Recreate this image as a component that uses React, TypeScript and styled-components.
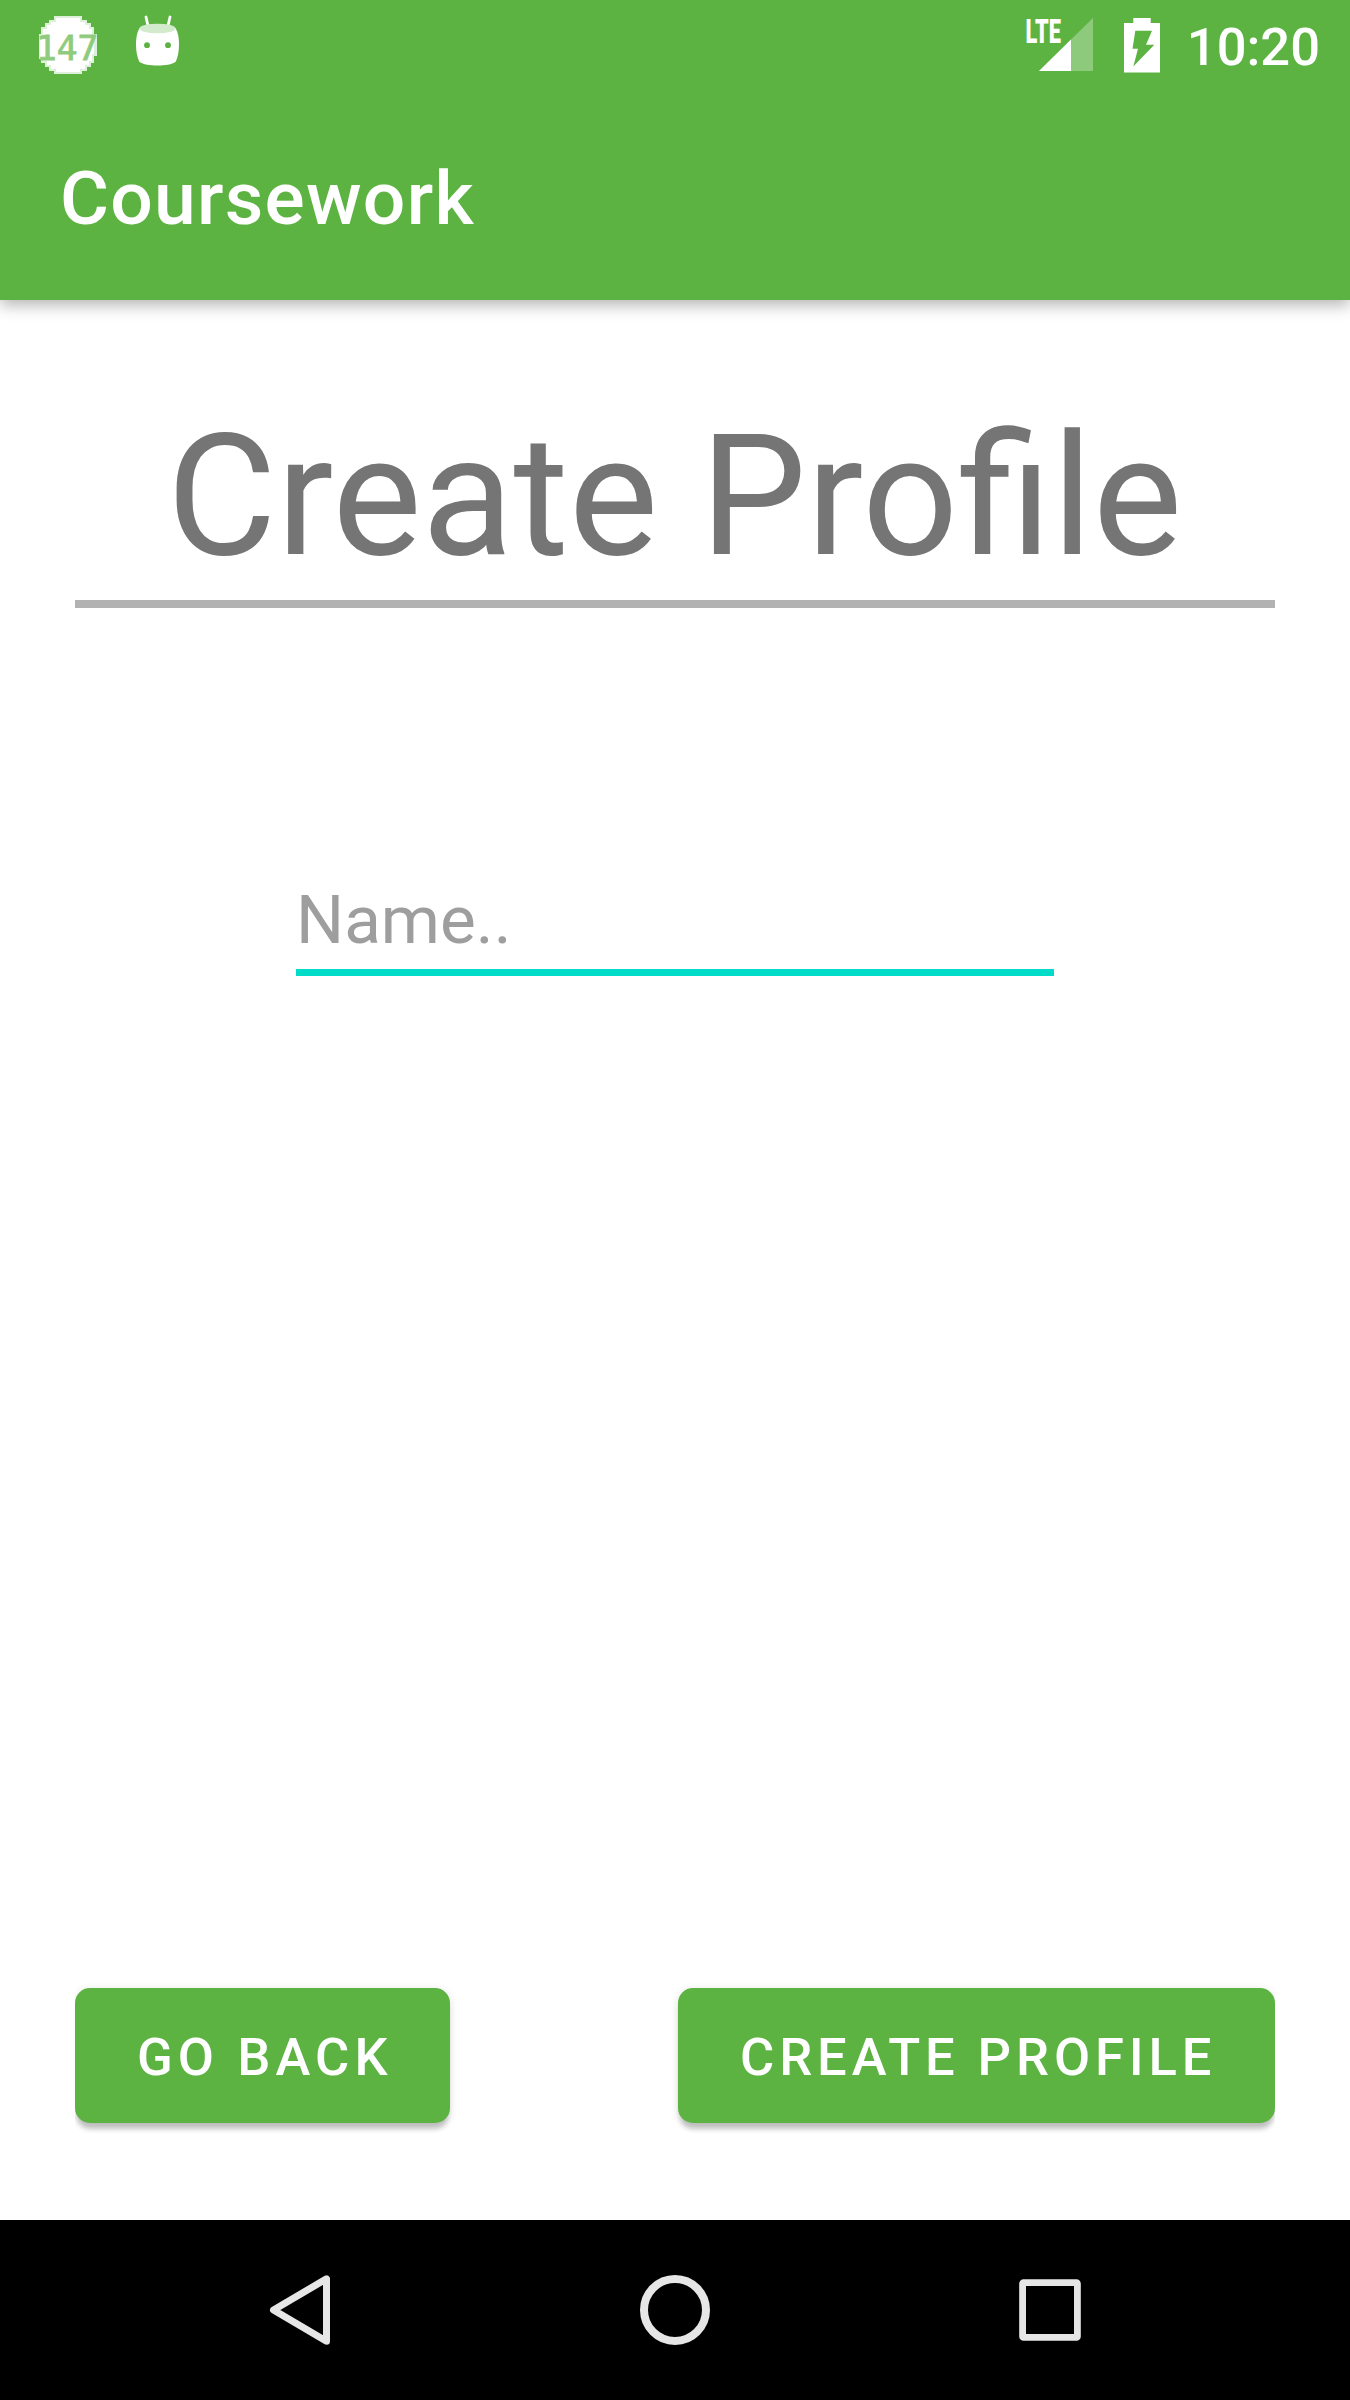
import React from "react";
import styled, { createGlobalStyle } from "styled-components";

const GREEN = "#5cb342";
const FONT = 'Roboto, "Noto Sans", sans-serif';

const GlobalStyle = createGlobalStyle`
  *, *::before, *::after { box-sizing: border-box; }
  body { margin: 0; background: #fff; font-family: ${FONT}; }
`;

const Screen = styled.div`
  display: flex;
  flex-direction: column;
  width: 1350px;
  height: 2400px;
  background: #fff;
  overflow: hidden;
`;

const Header = styled.header`
  flex: none;
  background: ${GREEN};
  color: #fff;
  box-shadow: 0 5px 15px rgba(0, 0, 0, 0.3);
`;

const StatusBar = styled.div`
  display: flex;
  align-items: flex-start;
  justify-content: space-between;
  height: 90px;
  padding: 0 30px 0 37px;
`;

const StatusGroup = styled.div<{ $gap: number }>`
  display: flex;
  gap: ${(p) => p.$gap}px;
`;

const StatusIcon = styled.svg`
  display: block;
  flex: none;
`;

const Clock = styled.time`
  margin-left: -2px;
  font-size: 52.5px;
  font-weight: 500;
  line-height: 94px;
`;

const AppBar = styled.div`
  display: flex;
  align-items: center;
  height: 210px;
  padding: 5px 60px 0;
`;

const AppTitle = styled.div`
  font-size: 75px;
  font-weight: 500;
  line-height: 90px;
  letter-spacing: 0.0165em;
`;

const Content = styled.main`
  flex: 1;
  display: flex;
  flex-direction: column;
  align-items: center;
  padding: 97px 75px 0;
`;

const Heading = styled.h1`
  align-self: stretch;
  margin: 0;
  padding: 0 1px 5px 0;
  border-bottom: 8px solid #b2b2b2;
  color: #757575;
  font-size: 168.75px;
  font-weight: 400;
  line-height: 198px;
  text-align: center;
`;

const NameInput = styled.input`
  width: 758px;
  height: 106px;
  margin-top: 262px;
  padding: 0;
  border: 0;
  border-bottom: 7px solid #00dcc8;
  background: transparent;
  outline: none;
  color: #212121;
  font: 400 67.5px/99px ${FONT};
  &::placeholder { color: #9e9e9e; opacity: 1; }
`;

/* Shadows are cut off at the outer edges of the row. */
const Actions = styled.div`
  align-self: stretch;
  display: flex;
  justify-content: space-between;
  margin-top: auto;
  padding: 12px 0 97px;
  overflow: hidden;
`;

const ActionButton = styled.button<{ $width: number; $tracking: number }>`
  width: ${(p) => p.$width}px;
  height: 135px;
  padding: 3px 0 0 62px;
  border: 0;
  border-radius: 15px;
  background: ${GREEN};
  box-shadow: 0 8px 5px -2px rgba(0, 0, 0, 0.2), 0 2px 10px rgba(0, 0, 0, 0.12);
  color: #fff;
  font: 500 52.5px/60px ${FONT};
  letter-spacing: ${(p) => p.$tracking}px;
  text-align: left;
  white-space: nowrap;
`;

const NavBar = styled.nav`
  flex: none;
  display: flex;
  justify-content: center;
  align-items: center;
  gap: 285px;
  height: 180px;
  background: #000;
`;

const NavButton = styled.button`
  display: block;
  width: 90px;
  height: 90px;
  padding: 0;
  border: 0;
  background: none;
  svg { display: block; }
`;

function CounterIcon() {
  return (
    <StatusIcon width="62" height="90" viewBox="37 0 62 90">
      <path
        shapeRendering="crispEdges"
        fill="#fff"
        fillOpacity=".8"
        d="M54 16H82V20H87V23H91V27H94V34H97V56H94V63H91V67H87V71H82V74H54V71H49V67H45V63H41V59H39V34H41V27H45V23H49V20H54Z"
      />
      <path
        shapeRendering="crispEdges"
        fill="#fff"
        d="M56 18H80V22H85V25H89V29H92V36H94V54H92V61H89V65H85V69H80V72H56V69H51V65H47V61H43V57H40V36H43V29H47V25H51V22H56Z"
      />
      <text
        x="36"
        y="59.5"
        fontFamily="'DejaVu Sans Mono', monospace"
        fontSize="34.5"
        fill="#8fcb7d"
        stroke="#8fcb7d"
        strokeWidth=".8"
      >
        147
      </text>
    </StatusIcon>
  );
}

function RobotIcon() {
  return (
    <StatusIcon width="46" height="90" viewBox="135 0 46 90">
      <path d="M146 17L148.5 28M170 17L167.5 28" stroke="#fff" strokeWidth="2.8" strokeLinecap="round" />
      <path d="M139.500 28C136.500 33 136 39 136 45C136 52 137.500 58 139.500 62C143 64.500 150 65.500 157.500 65.500C165 65.500 172 64.500 175.500 62C177.500 58 179 52 179 45C179 39 178.500 33 175.500 28Z" fill="#fff" />
      <ellipse cx="157.500" cy="28.500" rx="18" ry="4.800" fill="#d3ebcc" />
      <circle cx="147" cy="45.200" r="2.900" fill={GREEN} />
      <circle cx="168" cy="45.200" r="2.900" fill={GREEN} />
    </StatusIcon>
  );
}

function SignalIcon() {
  return (
    <StatusIcon width="70" height="90" viewBox="1025 0 70 90">
      <path d="M1093 18V71H1039Z" fill="#fff" fillOpacity=".3" />
      <path d="M1071 39.500V71H1039Z" fill="#fff" />
      <text
        x="1025.5"
        y="42.500"
        fontFamily="Roboto"
        fontWeight="900"
        fontSize="32.500"
        textLength="35.500"
        lengthAdjust="spacingAndGlyphs"
        fill="#fff"
      >
        LTE
      </text>
    </StatusIcon>
  );
}

function BatteryIcon() {
  return (
    <StatusIcon width="38" height="90" viewBox="1123 0 38 90">
      <path d="M1133.300 18H1150.700V23H1160V72.500H1124V23H1133.300Z" fill="#fff" />
      <path d="M1135.300 30.700H1152L1146 44.700H1154.300L1133.300 66.500L1138 48.700H1132.500Z" fill={GREEN} />
    </StatusIcon>
  );
}

export default function App() {
  return (
    <>
      <GlobalStyle />
      <Screen>
        <Header>
          <StatusBar>
            <StatusGroup $gap={36}>
              <CounterIcon />
              <RobotIcon />
            </StatusGroup>
            <StatusGroup $gap={28}>
              <SignalIcon />
              <BatteryIcon />
              <Clock>10:20</Clock>
            </StatusGroup>
          </StatusBar>
          <AppBar>
            <AppTitle>Coursework</AppTitle>
          </AppBar>
        </Header>
        <Content>
          <Heading>Create Profile</Heading>
          <NameInput placeholder="Name.." />
          <Actions>
            <ActionButton $width={375} $tracking={5.1}>GO BACK</ActionButton>
            <ActionButton $width={597} $tracking={4.9}>CREATE PROFILE</ActionButton>
          </Actions>
        </Content>
        <NavBar>
          <NavButton aria-label="Back">
            <svg width="90" height="90" viewBox="255 2265 90 90">
              <path d="M273.500 2310L326.500 2278.800V2341.200Z" fill="none" stroke="#e6e6e6" strokeWidth="7" strokeLinejoin="round" />
            </svg>
          </NavButton>
          <NavButton aria-label="Home">
            <svg width="90" height="90" viewBox="630 2265 90 90">
              <circle cx="675" cy="2310" r="31" fill="none" stroke="#e6e6e6" strokeWidth="8" />
            </svg>
          </NavButton>
          <NavButton aria-label="Recents">
            <svg width="90" height="90" viewBox="1005 2265 90 90">
              <rect x="1022.600" y="2282.600" width="54.800" height="54.800" rx="1" fill="none" stroke="#e6e6e6" strokeWidth="6.800" strokeLinejoin="round" />
            </svg>
          </NavButton>
        </NavBar>
      </Screen>
    </>
  );
}
